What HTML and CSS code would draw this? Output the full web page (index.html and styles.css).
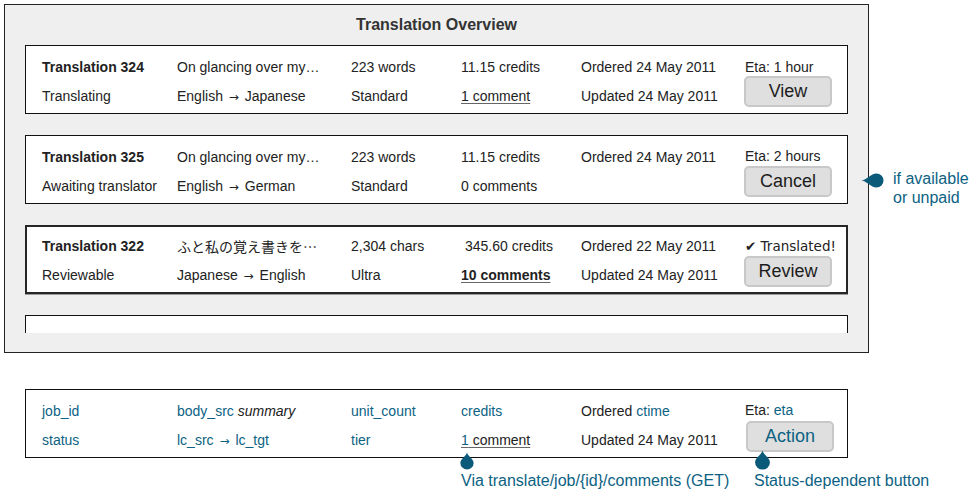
FILE: index.html
```html
<!DOCTYPE html>
<html lang="en">
<head>
<meta charset="utf-8">
<title>Translation Overview</title>
<link rel="stylesheet" href="styles.css">
</head>
<body>
<div class="page">
  <div class="top">
    <section class="panel">
      <h1 class="title">Translation Overview</h1>
      <div class="list">
        <div class="card">
          <span class="strong">Translation 324</span>
          <span>On glancing over my…</span>
          <span>223 words</span>
          <span>11.15 credits</span>
          <span>Ordered 24 May 2011</span>
          <span>Eta: 1 hour</span>
          <span>Translating</span>
          <span>English <span class="arrow">→</span> Japanese</span>
          <span>Standard</span>
          <span class="link">1 comment</span>
          <span>Updated 24 May 2011</span>
          <span class="btn">View</span>
        </div>
        <div class="card">
          <span class="strong">Translation 325</span>
          <span>On glancing over my…</span>
          <span>223 words</span>
          <span>11.15 credits</span>
          <span>Ordered 24 May 2011</span>
          <span class="eta-up">Eta: 2 hours</span>
          <span>Awaiting translator</span>
          <span>English <span class="arrow">→</span> German</span>
          <span>Standard</span>
          <span>0 comments</span>
          <span></span>
          <span class="btn">Cancel</span>
        </div>
        <div class="card active">
          <span class="strong">Translation 322</span>
          <span class="jp">ふと私の覚え書きを…</span>
          <span>2,304 chars</span>
          <span class="indent">345.60 credits</span>
          <span>Ordered 22 May 2011</span>
          <span class="done">✔ Translated!</span>
          <span>Reviewable</span>
          <span>Japanese <span class="arrow">→</span> English</span>
          <span>Ultra</span>
          <span class="link strong">10 comments</span>
          <span>Updated 24 May 2011</span>
          <span class="btn">Review</span>
        </div>
        <div class="card"></div>
      </div>
    </section>
    <aside class="side-note">
      <svg class="pin-left" viewBox="0 0 23 15" aria-hidden="true"><path d="M0 7.5 C5 7.5 10 0.5 15.5 0.5 A7 7 0 0 1 15.5 14.5 C10 14.5 5 7.5 0 7.5 Z"/></svg>
      <p>if available<br>or unpaid</p>
    </aside>
  </div>

  <div class="schema">
    <div class="card">
      <span class="f">job_id</span>
      <span><span class="f">body_src</span> <em>summary</em></span>
      <span class="f">unit_count</span>
      <span class="f">credits</span>
      <span>Ordered <span class="f">ctime</span></span>
      <span class="eta-up">Eta: <span class="f">eta</span></span>
      <span class="f">status</span>
      <span class="f">lc_src <span class="arrow">→</span> lc_tgt</span>
      <span class="f">tier</span>
      <span class="link"><span class="f">1</span> comment</span>
      <span>Updated 24 May 2011</span>
      <span class="btn btn-f">Action</span>
    </div>
    <div class="notes-row">
      <div class="note note-a">
        <svg class="pin-up pin-a" viewBox="0 0 16 19" aria-hidden="true"><path d="M8 0 C8 4 1 7 1 11.5 A7 7 0 0 0 15 11.5 C15 7 8 4 8 0 Z"/></svg>
        Via translate/job/{id}/comments (GET)
      </div>
      <div class="note note-b">
        <svg class="pin-up pin-b" viewBox="0 0 16 19" aria-hidden="true"><path d="M8 0 C8 4 1 7 1 11.5 A7 7 0 0 0 15 11.5 C15 7 8 4 8 0 Z"/></svg>
        Status-dependent button
      </div>
    </div>
  </div>
</div>
</body>
</html>
```

FILE: styles.css
```css
body {
  margin: 0;
  padding: 4px;
  background: #fff;
  color: #222;
  font-family: "Liberation Sans", Arial, sans-serif;
  font-size: 14px;
}

.top {
  display: flex;
  align-items: flex-start;
}

.panel {
  width: 865px;
  box-sizing: border-box;
  border: 1px solid #222;
  background: #efefef;
  padding: 10px 20px 19px;
}

.title {
  margin: 0;
  font-size: 16px;
  line-height: 20px;
  font-weight: bold;
  text-align: center;
  color: #333;
}

.list {
  margin-top: 10px;
  height: 288px;
  overflow: hidden;
}

.card {
  box-sizing: border-box;
  width: 823px;
  height: 69px;
  margin-bottom: 21px;
  border: 1px solid #111;
  background: #fff;
  padding: 6px 0 3px 16px;
  display: grid;
  grid-template-columns: 135px 174px 110px 120px 164px 1fr;
  grid-template-rows: 29px 29px;
  align-items: center;
  white-space: nowrap;
}

.card.active {
  border: 2px solid #262626;
  padding: 4px 0 3px 15px;
  box-shadow: 0 1px 0 #9a9a9a;
}

.strong {
  font-weight: bold;
}

.arrow {
  font-family: "DejaVu Sans", sans-serif;
  font-size: 12px;
  margin: 0 2px;
}

.jp {
  font-family: "Noto Sans CJK JP", "Liberation Sans", sans-serif;
  font-size: 14px;
}

.indent {
  padding-left: 4px;
}

.eta-up {
  position: relative;
  top: -1px;
}

.done {
  font-family: "DejaVu Sans", sans-serif;
  font-size: 13.5px;
}

.link {
  text-decoration: underline;
  text-decoration-color: #666;
  text-underline-offset: 2px;
}

.btn {
  align-self: start;
  margin-top: -5px;
  margin-left: -1px;
  width: 88px;
  height: 31px;
  box-sizing: border-box;
  border: 2px solid #c8c8c8;
  border-radius: 5px;
  background: #dfdfdf;
  color: #1c1c1c;
  font-size: 18px;
  display: flex;
  align-items: center;
  justify-content: center;
}

.card.active .btn {
  margin-top: -4px;
}

.f {
  color: #0c6283;
}

.btn-f {
  color: #0c6283;
  margin-left: 1px;
  margin-top: -4px;
}

em {
  font-style: italic;
  color: #222;
}

.side-note {
  position: relative;
  margin: 165px 0 0 24px;
  color: #0c6283;
  font-size: 16px;
  line-height: 19px;
}

.side-note p {
  margin: 0;
}

.pin-left {
  position: absolute;
  left: -32px;
  top: 4px;
  width: 23px;
  height: 15px;
  fill: #0b5a79;
}

.schema {
  margin: 36px 0 0 21px;
}

.schema .card {
  margin-bottom: 0;
}

.notes-row {
  width: 823px;
  box-sizing: border-box;
  margin-top: 13px;
  padding-left: 17px;
  display: grid;
  grid-template-columns: 135px 174px 110px 120px 164px 1fr;
  color: #0c6283;
  font-size: 16px;
  line-height: 20px;
  white-space: nowrap;
}

.note {
  position: relative;
}

.note-a {
  grid-column: 4 / span 2;
}

.note-b {
  grid-column: 6;
  padding-left: 9px;
}

.pin-up {
  position: absolute;
  fill: #0b5a79;
}

.pin-a {
  left: -2px;
  top: -19px;
  width: 16px;
  height: 18px;
}

.pin-b {
  left: 9px;
  top: -22px;
  width: 17px;
  height: 22px;
}
```
